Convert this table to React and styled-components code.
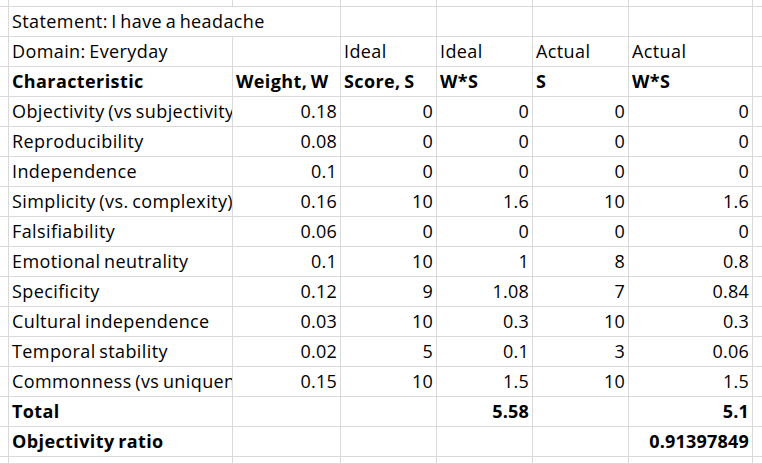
import styled, { createGlobalStyle } from "styled-components";

const GlobalStyle = createGlobalStyle`
  body {
    margin: 0;
    background: #ffffff;
  }
`;

const Sheet = styled.div`
  display: grid;
  grid-template-columns: 9px 224px 108px 96px 96px 96px 124px 1fr;
  grid-template-rows: 7px repeat(15, 30px) 1fr;
  width: 762px;
  height: 464px;
  overflow: hidden;
  background: #ffffff;
  font-family: "Open Sans", "Liberation Sans", sans-serif;
  font-size: 18px;
  color: #000000;
`;

const Cell = styled.div`
  box-sizing: border-box;
  border-right: ${(p) => (p.$edge ? "none" : "1px solid #d9d9d9")};
  border-bottom: 1px solid #d9d9d9;
  grid-column: span ${(p) => p.$span || 1};
  padding: 0 3px;
  line-height: 29px;
  white-space: nowrap;
  overflow: hidden;
  text-align: ${(p) => (p.$num ? "right" : "left")};
  font-weight: ${(p) => (p.$bold ? 700 : 400)};
  letter-spacing: ${(p) => (p.$num ? "0.2px" : "0.4px")};
  word-spacing: ${(p) => (p.$num ? "normal" : "-1.5px")};
`;

const rows = [
  ["Objectivity (vs subjectivity)", "0.18", "0", "0", "0", "0"],
  ["Reproducibility", "0.08", "0", "0", "0", "0"],
  ["Independence", "0.1", "0", "0", "0", "0"],
  ["Simplicity (vs. complexity)", "0.16", "10", "1.6", "10", "1.6"],
  ["Falsifiability", "0.06", "0", "0", "0", "0"],
  ["Emotional neutrality", "0.1", "10", "1", "8", "0.8"],
  ["Specificity", "0.12", "9", "1.08", "7", "0.84"],
  ["Cultural independence", "0.03", "10", "0.3", "10", "0.3"],
  ["Temporal stability", "0.02", "5", "0.1", "3", "0.06"],
  ["Commonness (vs uniqueness)", "0.15", "10", "1.5", "10", "1.5"],
];

// one sheet row: gutter, six columns, trailing partial column
const Row = ({ cells, bold = [], num = [] }) => (
  <>
    <Cell />
    {cells.map((c, i) => (
      <Cell key={i} $bold={bold.includes(i)} $num={num.includes(i)}>
        {c}
      </Cell>
    ))}
    <Cell $edge />
  </>
);

const App = () => {
  return (
    <>
      <GlobalStyle />
      <Sheet>
        <Row cells={["", "", "", "", "", ""]} />

        <Cell />
        <Cell $span={2}>Statement: I have a headache</Cell>
        <Cell />
        <Cell />
        <Cell />
        <Cell />
        <Cell $edge />

        <Row cells={["Domain: Everyday", "", "Ideal", "Ideal", "Actual", "Actual"]} />
        <Row
          cells={["Characteristic", "Weight, W", "Score, S", "W*S", "S", "W*S"]}
          bold={[0, 1, 2, 3, 4, 5]}
        />
        {rows.map((r) => (
          <Row key={r[0]} cells={r} num={[1, 2, 3, 4, 5]} />
        ))}
        <Row cells={["Total", "", "", "5.58", "", "5.1"]} bold={[0, 3, 5]} num={[3, 5]} />
        <Row
          cells={["Objectivity ratio", "", "", "", "", "0.91397849"]}
          bold={[0, 5]}
          num={[5]}
        />
        <Row cells={["", "", "", "", "", ""]} />
      </Sheet>
    </>
  );
};

export default App;
